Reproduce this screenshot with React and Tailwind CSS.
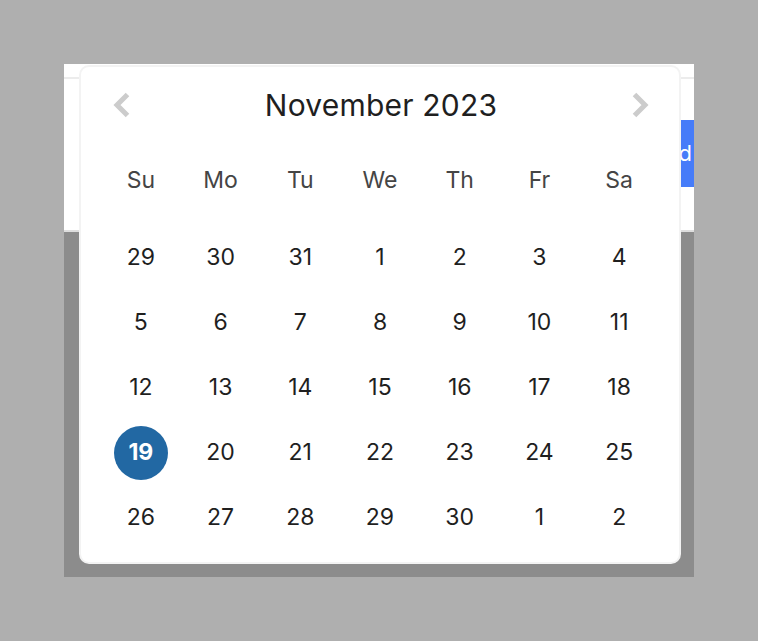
import React from "react";

const weekDays = ["Su", "Mo", "Tu", "We", "Th", "Fr", "Sa"];

const weeks = [
  [29, 30, 31, 1, 2, 3, 4],
  [5, 6, 7, 8, 9, 10, 11],
  [12, 13, 14, 15, 16, 17, 18],
  [19, 20, 21, 22, 23, 24, 25],
  [26, 27, 28, 29, 30, 1, 2],
];

const Chevron = ({ dir }) => (
  <svg width="20" height="26" viewBox="0 0 20 26" fill="none">
    <path
      d={dir === "left" ? "M15.5 2.5 L5 13 L15.5 23.5" : "M4.5 2.5 L15 13 L4.5 23.5"}
      stroke="#cccccc"
      strokeWidth="5"
      strokeLinejoin="miter"
    />
  </svg>
);

const App = () => {
  return (
    <div
      className="w-[758px] h-[641px] bg-[#afafaf] pt-[64px] pl-[64px] relative"
      style={{ fontFamily: "Inter, 'Noto Sans', sans-serif" }}
    >
      {/* background sheet */}
      <div className="w-[630px] h-[513px] flex flex-col overflow-hidden">
        <div className="h-[166px] bg-white flex flex-col">
          <div className="h-[15px] border-b-2 border-[#ececec]" />
          <div className="flex justify-end mt-[41px]">
            <button className="h-[67px] bg-[#467cf9] text-white text-[22px] pl-4 pr-[2px]">
              Add
            </button>
          </div>
        </div>
        <div className="h-[2px] bg-[#dedede]" />
        <div className="flex-1 bg-[#8c8c8c]" />
      </div>

      {/* date picker popup */}
      <div className="absolute left-[79px] top-[65px] w-[602px] h-[499px] bg-white rounded-[10px] border-2 border-[#f3f3f3] px-[20px]">
        <div className="h-[76px] flex items-center justify-between pl-[11px] pr-[9px]">
          <Chevron dir="left" />
          <span className="text-[30px] text-[#1f1f1f] tracking-[0.2px]">November 2023</span>
          <Chevron dir="right" />
        </div>
        <div className="grid grid-cols-7 h-[74px] items-center">
          {weekDays.map((d) => (
            <span key={d} className="text-center text-[23px] text-[#454545]">
              {d}
            </span>
          ))}
        </div>
        <div className="mt-[8px]">
          {weeks.map((week, wi) => (
            <div key={wi} className="grid grid-cols-7 h-[65px] items-center">
              {week.map((day, di) => {
                const selected = wi === 3 && di === 0;
                return (
                  <div key={di} className="flex justify-center">
                    {selected ? (
                      <span className="w-[54px] h-[54px] rounded-full bg-[#2268a3] text-white font-bold text-[23px] flex items-center justify-center">
                        {day}
                      </span>
                    ) : (
                      <span className="text-[23px] text-[#1f1f1f]">{day}</span>
                    )}
                  </div>
                );
              })}
            </div>
          ))}
        </div>
      </div>
    </div>
  );
};

export default App;
